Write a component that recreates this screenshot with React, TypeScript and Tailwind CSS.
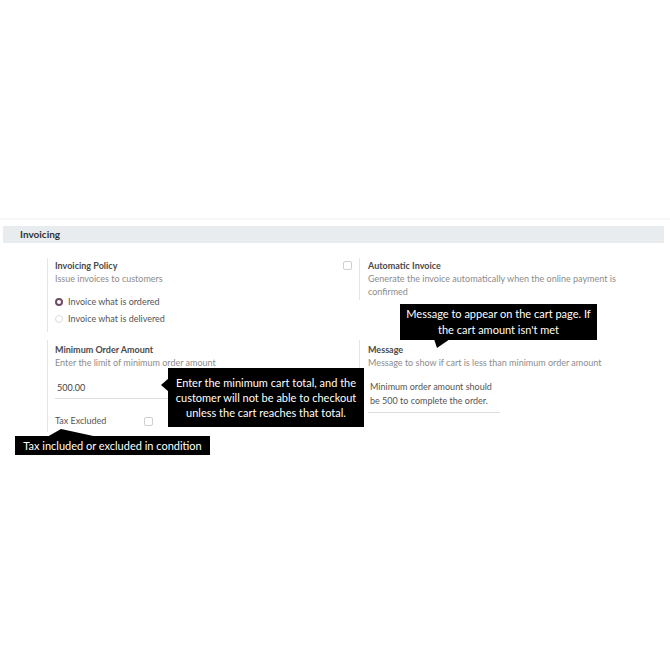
import React from "react";

function Radio({ checked, label }: { checked?: boolean; label: string }) {
  return (
    <div className="flex items-center gap-[5px] h-[17px]">
      {checked ? (
        <span className="w-[8px] h-[8px] rounded-full border-[2.5px] border-[#714b67] bg-white box-border" />
      ) : (
        <span className="w-[8px] h-[8px] rounded-full border border-[#dcdcdc] bg-white box-border" />
      )}
      <span className="text-[#555] text-[9px]">{label}</span>
    </div>
  );
}

function Checkbox() {
  return <span className="block w-[9px] h-[9px] rounded-[2px] border border-[#cfcfcf] bg-white box-border" />;
}

export default function App() {
  return (
    <div
      className="relative w-[670px] h-[670px] bg-white overflow-hidden"
      style={{ fontFamily: "Lato, 'Noto Sans', sans-serif" }}
    >
      <div className="pt-[218px]">
        <div className="h-[2px] bg-[#f7f7f7]" />
        <div className="mt-[6px] ml-[3px] w-[661px] h-[17px] bg-[#e9ecef] flex items-center pl-[17px] text-[10px] font-bold text-[#333]">
          Invoicing
        </div>

        <div className="grid grid-cols-[296px_1fr] pl-[47px] pt-[15px]">
          {/* Row 1 left */}
          <div className="border-l border-[#e5e5e5] pl-[7px] h-[74px] leading-[13px]">
            <div className="pt-[1px] text-[9px] font-bold text-[#4a4a4a]">Invoicing Policy</div>
            <div className="text-[9px] text-[#8c8c8c]">Issue invoices to customers</div>
            <div className="mt-[8px] flex flex-col">
              <Radio checked label="Invoice what is ordered" />
              <Radio label="Invoice what is delivered" />
            </div>
          </div>
          {/* Row 1 right */}
          <div className="flex items-start">
            <div className="pt-[3px] w-[16px]">
              <Checkbox />
            </div>
            <div className="border-l border-[#e5e5e5] pl-[8px] leading-[13px] h-[42px] w-[262px]">
              <div className="pt-[1px] text-[9px] font-bold text-[#4a4a4a]">Automatic Invoice</div>
              <div className="text-[9px] text-[#8c8c8c]">
                Generate the invoice automatically when the online payment is confirmed
              </div>
            </div>
          </div>

          {/* Row 2 left */}
          <div className="mt-[8px] border-l border-[#e5e5e5] pl-[7px] h-[92px] leading-[12.5px]">
            <div className="pt-[4px] text-[9px] font-bold text-[#4a4a4a]">Minimum Order Amount</div>
            <div className="text-[9px] text-[#8c8c8c]">Enter the limit of minimum order amount</div>
            <div className="mt-[10px] w-[160px] h-[20px] border-b border-[#dedede] flex items-center pl-[2px] text-[9px] text-[#444]">
              500.00
            </div>
            <div className="mt-[16px] flex items-center">
              <span className="w-[89px] text-[9px] text-[#555]">Tax Excluded</span>
              <Checkbox />
            </div>
          </div>
          {/* Row 2 right */}
          <div className="mt-[8px] flex items-start">
            <div className="w-[16px]" />
            <div className="border-l border-[#e5e5e5] pl-[8px] leading-[12.5px] h-[75px]">
              <div className="pt-[4px] text-[9px] font-bold text-[#4a4a4a]">Message</div>
              <div className="text-[9px] text-[#8c8c8c]">
                Message to show if cart is less than minimum order amount
              </div>
              <div className="mt-[11px] w-[132px] border-b border-[#dedede] pl-[2px] pb-[4px] text-[9px] leading-[14px] text-[#555]">
                Minimum order amount should be 500 to complete the order.
              </div>
            </div>
          </div>
        </div>
      </div>

      {/* Tooltip 1 */}
      <div className="absolute left-[400px] top-[304px] w-[197px] h-[36px] bg-black text-white text-[11px] leading-[16px] flex items-center justify-center text-center">
        Message to appear on the cart page. If
        <br />
        the cart amount isn't met
      </div>
      <svg className="absolute left-[430px] top-[339px]" width="24" height="10" viewBox="0 0 24 10">
        <polygon points="4,0 20,0 7,9" fill="#000" />
      </svg>

      {/* Tooltip 2 */}
      <div className="absolute left-[168px] top-[368px] w-[196px] h-[59px] bg-black text-white text-[11px] leading-[15px] flex items-center justify-center text-center">
        Enter the minimum cart total, and the
        <br />
        customer will not be able to checkout
        <br />
        unless the cart reaches that total.
      </div>
      <svg className="absolute left-[160px] top-[377px]" width="9" height="16" viewBox="0 0 9 16">
        <polygon points="9,1 1,8 9,15" fill="#000" />
      </svg>

      {/* Tooltip 3 */}
      <div className="absolute left-[15px] top-[436px] w-[195px] h-[19px] bg-black text-white text-[11px] leading-[19px] text-center">
        Tax included or excluded in condition
      </div>
      <svg className="absolute left-[45px] top-[428px]" width="55" height="9" viewBox="0 0 55 9">
        <polygon points="2,9 16,1 53,9" fill="#000" />
      </svg>
    </div>
  );
}
